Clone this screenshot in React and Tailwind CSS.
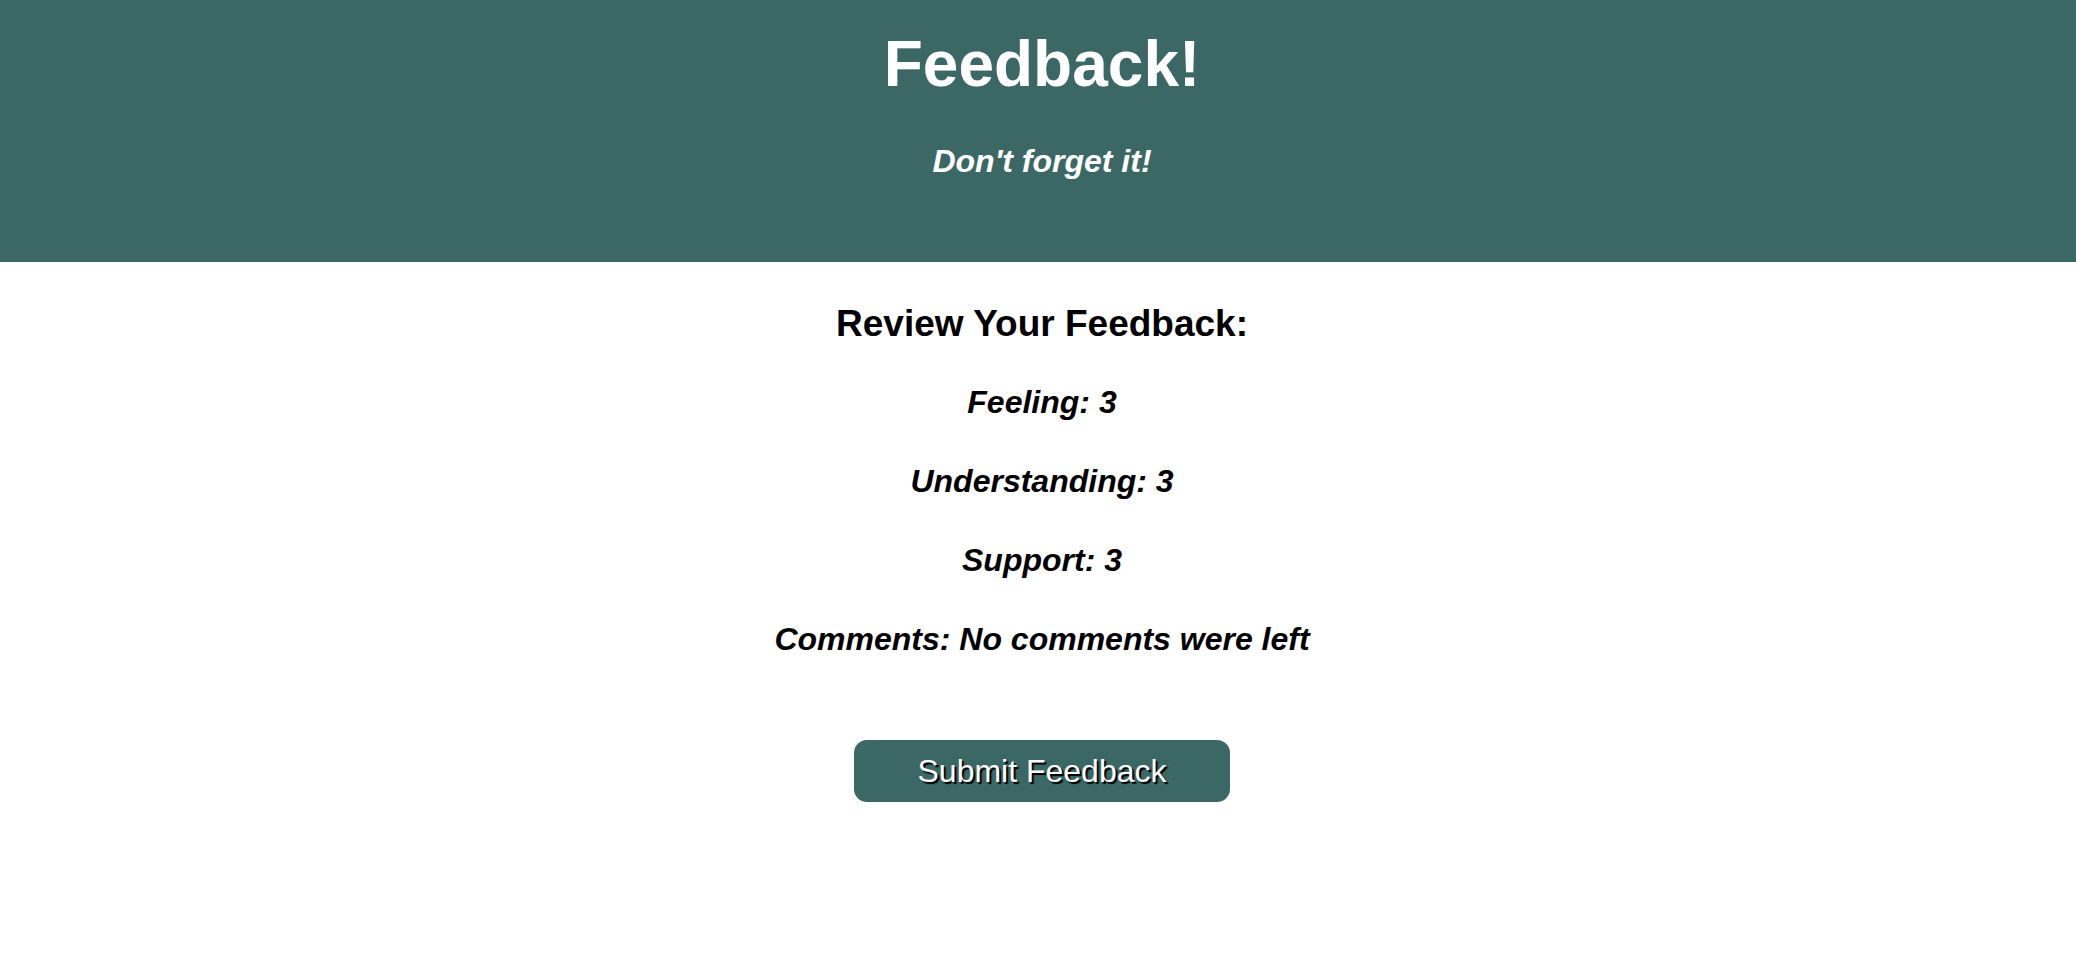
export default function App() {
  const rows = ["Feeling: 3", "Understanding: 3", "Support: 3", "Comments: No comments were left"];
  return (
    <div className="min-h-[964px] w-full bg-white text-black" style={{ fontFamily: '"Liberation Sans", Arial, Helvetica, sans-serif' }}>
      <header className="flex h-[262px] flex-col items-center bg-[#3b6865] pl-[8px] text-white">
        <h1 className="pt-[32px] text-[64px] font-bold leading-[64px]">Feedback!</h1>
        <h4 className="mt-[49px] text-[32px] font-bold italic leading-[32px]">Don't forget it!</h4>
      </header>
      <main className="flex flex-col items-center pl-[8px]">
        <h2 className="mt-[43px] text-[37px] font-bold leading-[37px]">Review Your Feedback:</h2>
        <div className="mt-[44px] flex flex-col items-center gap-[47px]">
          {rows.map((r) => (
            <h3 key={r} className="text-[32px] font-bold italic leading-[32px]">{r}</h3>
          ))}
        </div>
        <button className="mt-[85px] flex h-[62px] w-[376px] items-center justify-center rounded-[13px] bg-[#3b6865] text-[32px] leading-[32px] text-white [text-shadow:2px_2px_1px_#000]">
          Submit Feedback
        </button>
      </main>
    </div>
  );
}
